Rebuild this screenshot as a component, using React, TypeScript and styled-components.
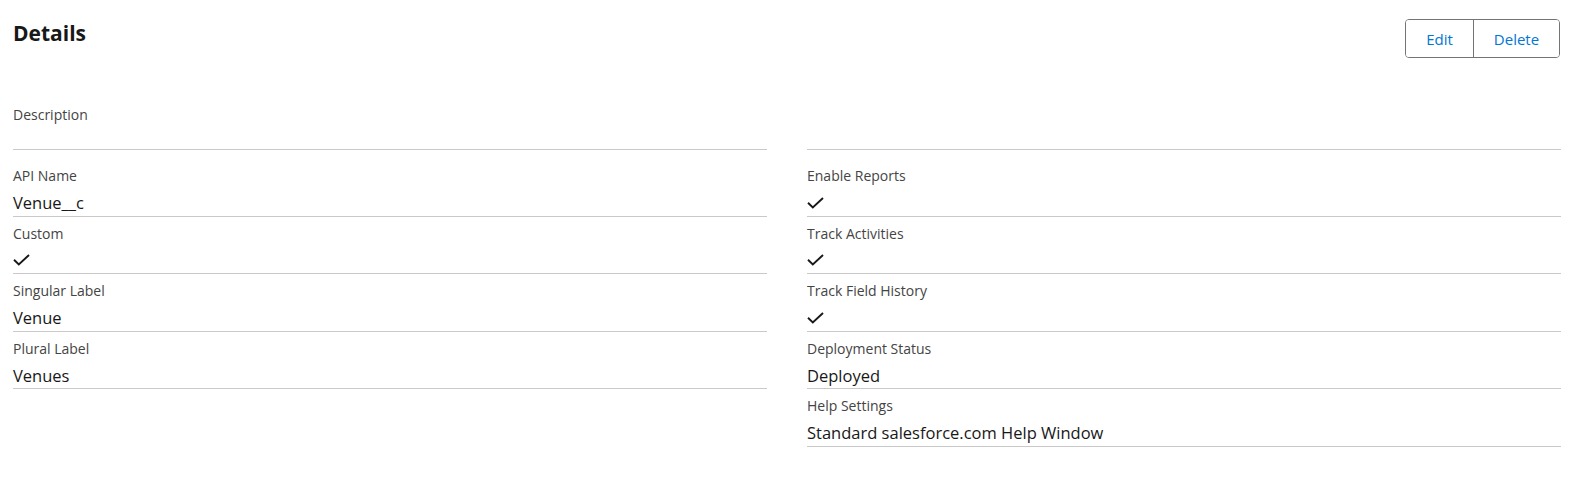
import React from "react";
import styled, { createGlobalStyle } from "styled-components";

const Global = createGlobalStyle`
  html, body { margin: 0; padding: 0; background: #fff; }
  body { font-family: "Open Sans", "Noto Sans", sans-serif; color: #181818; }
`;

const Page = styled.div`
  padding: 0 20px 0 13px;
`;

const Header = styled.div`
  display: flex;
  justify-content: space-between;
  align-items: flex-start;
  padding-top: 19px;
  height: 73px;
  box-sizing: border-box;
`;

const Title = styled.h2`
  margin: 1px 0 0;
  font-size: 21px;
  font-weight: 700;
  line-height: 26px;
  color: #181818;
`;

const ButtonGroup = styled.div`
  display: flex;
  border: 1px solid #747474;
  border-radius: 4px;
  overflow: hidden;
  height: 39px;
  box-sizing: border-box;
  margin-right: 1px;
`;

const Button = styled.button<{ $w: number }>`
  width: ${(p) => p.$w}px;
  border: none;
  background: #fff;
  color: #0176d3;
  font-family: inherit;
  font-size: 15px;
  padding: 0;
  & + & { border-left: 1px solid #747474; }
`;

const Grid = styled.div<{ $gapTop?: number }>`
  display: grid;
  grid-template-columns: 1fr 1fr;
  column-gap: 40px;
  margin-top: ${(p) => p.$gapTop ?? 0}px;
  align-items: start;
`;

const Column = styled.div`
  display: flex;
  flex-direction: column;
`;

const Field = styled.div<{ $tall?: boolean }>`
  border-bottom: 1px solid #c9c9c9;
  height: ${(p) => (p.$tall ? 77 : 57.5)}px;
  padding-top: ${(p) => (p.$tall ? 32 : 7)}px;
  box-sizing: border-box;
  display: flex;
  flex-direction: column;
`;

const Label = styled.div`
  font-size: 14px;
  line-height: 20px;
  height: 20px;
  color: #444;
`;

const Value = styled.div`
  font-size: 16.5px;
  line-height: 25px;
  height: 25px;
  margin-top: 4px;
  display: flex;
  align-items: center;
  color: #181818;
`;

const Check = () => (
  <svg width="17" height="12" viewBox="0 0 17 12">
    <path d="M1 5.8 L5.8 10.4 L16 1" fill="none" stroke="#181818" strokeWidth="1.9" />
  </svg>
);

type F = { label: string; value?: string; check?: boolean };

const left: F[] = [
  { label: "API Name", value: "Venue__c" },
  { label: "Custom", check: true },
  { label: "Singular Label", value: "Venue" },
  { label: "Plural Label", value: "Venues" },
];
const right: F[] = [
  { label: "Enable Reports", check: true },
  { label: "Track Activities", check: true },
  { label: "Track Field History", check: true },
  { label: "Deployment Status", value: "Deployed" },
  { label: "Help Settings", value: "Standard salesforce.com Help Window" },
];

const Col = ({ items }: { items: F[] }) => (
  <Column>
    {items.map((f, i) => (
      <Field key={i}>
        <Label>{f.label}</Label>
        <Value>{f.check ? <Check /> : f.value}</Value>
      </Field>
    ))}
  </Column>
);

export default function App() {
  return (
    <Page>
      <Global />
      <Header>
        <Title>Details</Title>
        <ButtonGroup>
          <Button $w={67}>Edit</Button>
          <Button $w={86}>Delete</Button>
        </ButtonGroup>
      </Header>
      <Grid>
        <Field $tall>
          <Label>Description</Label>
          <Value />
        </Field>
        <Field $tall />
      </Grid>
      <Grid $gapTop={9}>
        <Col items={left} />
        <Col items={right} />
      </Grid>
    </Page>
  );
}
